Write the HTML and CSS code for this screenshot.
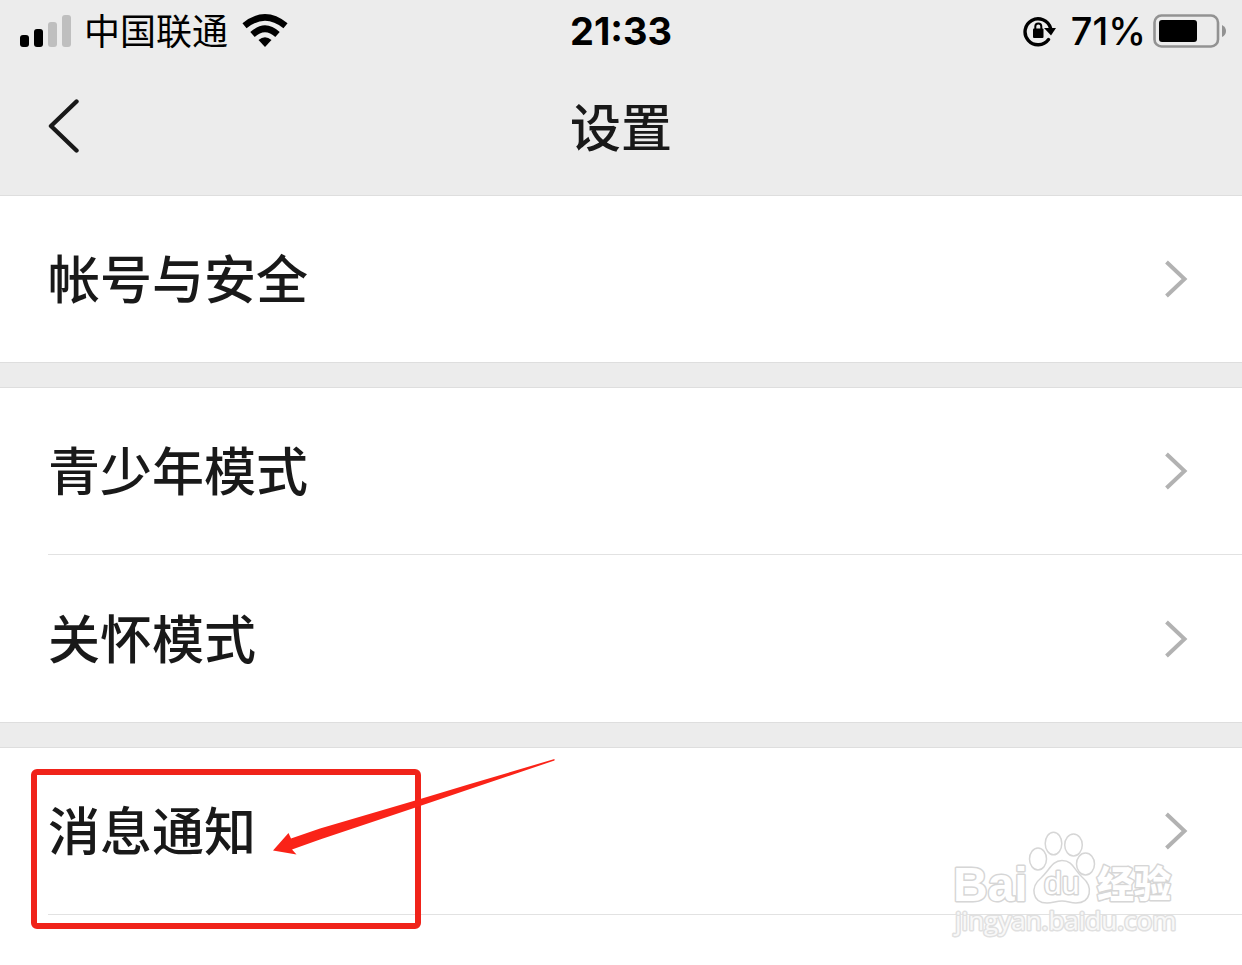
FILE: index.html
```
<!DOCTYPE html>
<html lang="zh-CN">
<head>
<meta charset="utf-8">
<meta name="viewport" content="width=device-width, initial-scale=1">
<title>设置</title>
<link rel="stylesheet" href="styles.css">
</head>
<body>
<header class="header">
  <div class="status">
    <div class="status-left">
      <svg class="signal" width="52" height="32" viewBox="0 0 52 32" aria-hidden="true">
        <rect x="0" y="20" width="9" height="12" rx="3"/>
        <rect x="14" y="14" width="9" height="18" rx="3"/>
        <rect class="signal-off" x="28" y="7" width="9" height="25" rx="3"/>
        <rect class="signal-off" x="42" y="0" width="9" height="32" rx="3"/>
      </svg>
      <span class="carrier">中国联通</span>
      <svg class="wifi" width="46" height="34" viewBox="0 0 46 34" aria-hidden="true">
        <path d="M2.500 11.800Q23-5 43.500 11.800" fill="none" stroke="#000" stroke-width="6.500"/>
        <path d="M10.500 20.500Q23 9 35.500 20.500" fill="none" stroke="#000" stroke-width="6.500"/>
        <path d="M16.500 26Q23 20.500 29.500 26L23 33Z"/>
      </svg>
    </div>
    <time class="clock">21:33</time>
    <div class="status-right">
      <svg width="34" height="32" viewBox="0 0 34 32" aria-hidden="true">
        <path d="M25.500 24.500A13 13 0 1 1 27.500 13" fill="none" stroke="#000" stroke-width="3.400" stroke-linecap="round"/>
        <path d="M21 13H33L28 20.500Z"/>
        <rect x="10" y="13.500" width="10.500" height="9.500" rx="1"/>
        <path d="M12.300 15v-3.500a3 3 0 0 1 6 0V15" fill="none" stroke="#000" stroke-width="2"/>
      </svg>
      <span class="percent">71%</span>
      <svg width="74" height="34" viewBox="0 0 74 34" aria-hidden="true">
        <rect x="2.500" y="1.500" width="63.500" height="31" rx="7" fill="none" stroke="#929292" stroke-width="2.600"/>
        <rect x="7" y="6" width="38" height="22" rx="3"/>
        <path d="M70 11Q74 13 74 17T70 23Z" fill="#929292"/>
      </svg>
    </div>
  </div>
  <nav class="navbar">
    <button class="back" type="button" aria-label="返回">
      <svg width="32" height="54" viewBox="0 0 32 54"><path d="M28.500 2.500L3 27L28.500 51.500" fill="none" stroke="#191919" stroke-width="4.400" stroke-linecap="round" stroke-linejoin="round"/></svg>
    </button>
    <h1 class="title">设置</h1>
  </nav>
</header>
<main class="list">
  <section class="group">
    <a class="row" href="#account"><span class="label">帐号与安全</span><svg class="chevron" viewBox="0 0 24 40"><path d="M2.500 3L20.500 20L2.500 37"/></svg></a>
  </section>
  <section class="group">
    <a class="row" href="#youth"><span class="label">青少年模式</span><svg class="chevron" viewBox="0 0 24 40"><path d="M2.500 3L20.500 20L2.500 37"/></svg></a>
    <a class="row" href="#care"><span class="label">关怀模式</span><svg class="chevron" viewBox="0 0 24 40"><path d="M2.500 3L20.500 20L2.500 37"/></svg></a>
  </section>
  <section class="group group-last">
    <a class="row" href="#notifications"><span class="label">消息通知</span><svg class="chevron" viewBox="0 0 24 40"><path d="M2.500 3L20.500 20L2.500 37"/></svg></a>
    <div class="row-next"></div>
    <svg class="watermark" width="232" height="112" viewBox="0 0 232 112" role="img" aria-label="Baidu 经验">
      <g class="wm-shape">
        <text class="wm-bai" x="6" y="72">Bai</text>
        <ellipse cx="91" cy="30" rx="8.500" ry="11"/>
        <ellipse cx="106.500" cy="14.500" rx="8.300" ry="11.300"/>
        <ellipse cx="126.500" cy="16" rx="8.800" ry="11"/>
        <ellipse cx="138.500" cy="35" rx="9" ry="11"/>
        <path d="M115 31.500C126 31.500 127 41 135 48C147 58 144 74 129 74C123 74 121 72 115 72C109 72 106 74 100 74C85 74 83 58 94 49C102 42 105 31.500 115 31.500Z"/>
        <text class="wm-du" x="97" y="65">du</text>
        <text class="wm-cn" x="150" y="69">经验</text>
        <text class="wm-url" x="8" y="101">jingyan.baidu.com</text>
      </g>
    </svg>
    <div class="highlight"></div>
    <svg class="arrow" width="284" height="98" viewBox="0 0 284 98" aria-hidden="true">
      <path d="M282.500 1L198 26L145 42L48 70.500L19 80.500L16.500 75L1 92.500L24.500 96.500L20 91.500L48 81.500L145 49L198 31L282.500 2.500Z" fill="#fa2318"/>
    </svg>
  </section>
</main>
</body>
</html>
```
FILE: styles.css
```
* { box-sizing: border-box; }

body {
  margin: 0;
  min-height: 100vh;
  display: flex;
  flex-direction: column;
  background: #ececec;
  color: #191919;
  font-family: "Liberation Sans", "Noto Sans CJK SC", sans-serif;
}

svg { display: block; flex: none; }

.status {
  display: grid;
  grid-template-columns: 1fr auto 1fr;
  align-items: center;
  height: 62px;
  padding: 0 16px;
  color: #000;
}

.status-left,
.status-right {
  display: flex;
  align-items: center;
}

.status-left { gap: 12px; padding-left: 4px; }
.status-right { justify-content: flex-end; gap: 6px; }
.signal-off { fill: #bfbfbf; }

.carrier {
  padding-bottom: 4px;
  font-family: "Noto Sans CJK SC", sans-serif;
  font-size: 36px;
  line-height: 48px;
}

.wifi { margin-left: 2px; }

.clock,
.percent {
  font-family: Inter, sans-serif;
  font-size: 38px;
  line-height: 48px;
}

.clock { font-weight: 700; }
.percent { padding-left: 8px; font-weight: 500; }

.navbar {
  display: grid;
  grid-template-columns: 1fr auto 1fr;
  align-items: center;
  height: 133px;
  padding: 0 48px;
}

.back {
  justify-self: start;
  padding: 0 0 6px;
  border: 0;
  background: none;
}

.title {
  margin: 0;
  padding-top: 2px;
  font-size: 51px;
  font-weight: 500;
  line-height: 72px;
}

.list {
  flex: 1;
  display: flex;
  flex-direction: column;
  gap: 24px;
}

.group {
  position: relative;
  border: solid #dedede;
  border-width: 1px 0;
  background: #fff;
}

.group-last {
  flex: 1;
  border-bottom: 0;
}

.row {
  display: flex;
  align-items: center;
  justify-content: space-between;
  height: 166px;
  padding: 0 54px 0 48px;
  color: inherit;
  font-size: 52px;
  font-weight: 500;
  line-height: 72px;
  text-decoration: none;
}

.label { padding-top: 4px; }

.row + .row,
.row-next {
  margin-left: 48px;
  padding-left: 0;
  border-top: 1px solid #e2e2e2;
}

.row + .row { height: 168px; }

.row-next { min-height: 51px; }

.chevron {
  width: 24px;
  height: 40px;
  fill: none;
  stroke: #b2b2b2;
  stroke-width: 4;
}

.highlight {
  position: absolute;
  top: 21px;
  left: 31px;
  width: 390px;
  height: 160px;
  border: 6px solid #f0231a;
  border-radius: 6px;
}

.arrow {
  position: absolute;
  top: 10px;
  left: 272px;
}

.watermark {
  position: absolute;
  top: 81px;
  right: 63px;
}

.wm-shape {
  fill: #fff;
  stroke: #d6d6d6;
  stroke-width: 1.5px;
}

.wm-shape text {
  paint-order: stroke;
  stroke-width: 3px;
  stroke-linejoin: round;
}

.wm-bai { font: 700 48px "Liberation Sans", sans-serif; }
.wm-du { font: 400 32px "Liberation Sans", sans-serif; }
.wm-cn { font: 900 37px "Noto Sans CJK SC", sans-serif; }
.wm-url { font: 400 26px "Open Sans", sans-serif; }
.wm-shape .wm-url { stroke: #e0e0e0; fill-opacity: 0.8; }
```
